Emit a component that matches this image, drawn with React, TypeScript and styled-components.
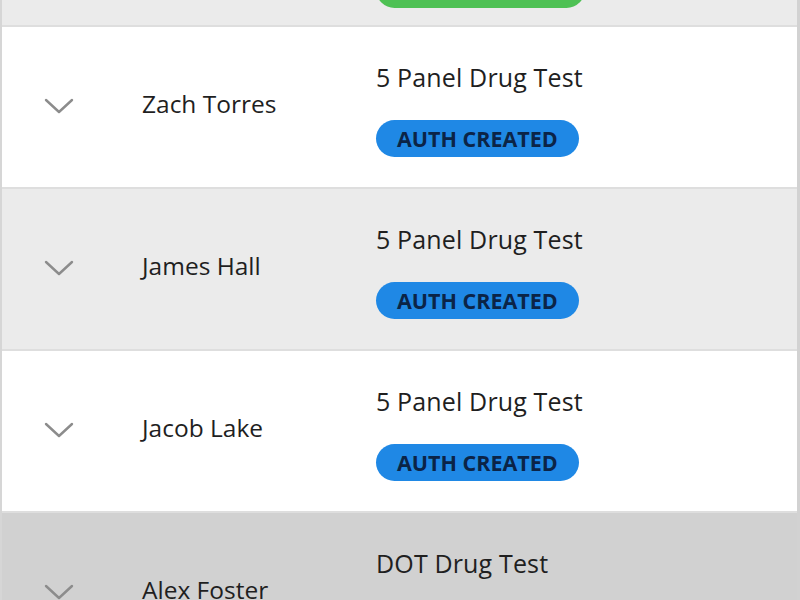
import React from 'react';
import styled, { createGlobalStyle } from 'styled-components';

const GlobalStyle = createGlobalStyle`
  html, body {
    margin: 0;
    padding: 0;
    background: #ffffff;
    overflow: hidden;
  }
  body {
    font-family: "Open Sans", "Noto Sans", sans-serif;
  }
`;

const List = styled.div`
  width: 800px;
  height: 600px;
  overflow: hidden;
  box-sizing: border-box;
  border-left: 2px solid #d6d6d6;
  border-right: 3px solid #d2d2d2;
`;

const Scroller = styled.div`
  margin-top: -135px;
`;

type Tone = 'white' | 'light' | 'dark';

const rowBg: Record<Tone, string> = {
  white: '#ffffff',
  light: '#ebebeb',
  dark: '#d1d1d1',
};

const Row = styled.div<{ $tone: Tone }>`
  height: 160px;
  display: grid;
  grid-template-columns: 140px 234px 1fr;
  align-items: center;
  background: ${(p) => rowBg[p.$tone]};
  border-bottom: 2px solid #dedede;
`;

const Toggle = styled.div`
  display: flex;
  justify-content: flex-start;
  padding-left: 42px;
  padding-bottom: 2px;
`;

const Name = styled.div`
  font-size: 24.5px;
  color: #1f1f1f;
  line-height: 30px;
  padding-bottom: 6px;
`;

const Detail = styled.div<{ $tail?: boolean }>`
  display: flex;
  flex-direction: column;
  align-items: flex-start;
  gap: 28px;
  align-self: ${(p) => (p.$tail ? 'end' : 'center')};
  padding-top: ${(p) => (p.$tail ? '0' : '4px')};
  padding-bottom: ${(p) => (p.$tail ? '17px' : '0')};
`;

const Title = styled.div`
  font-size: 25px;
  color: #1f1f1f;
  line-height: 30px;
  letter-spacing: 0.15px;
`;

const statusColors = {
  green: { bg: '#4ec154', fg: '#0f3a14' },
  blue: { bg: '#1f88e5', fg: '#0b2447' },
};

const Badge = styled.span<{ $kind: 'green' | 'blue' }>`
  display: inline-flex;
  align-items: center;
  height: 37px;
  padding: 0 21px;
  border-radius: 19px;
  background: ${(p) => statusColors[p.$kind].bg};
  color: ${(p) => statusColors[p.$kind].fg};
  font-size: 21.5px;
  font-weight: 700;
`;

const Chevron = () => (
  <svg width="30" height="18" viewBox="0 0 30 18">
    <polyline
      points="2,3 15,15 28,3"
      fill="none"
      stroke="#8c8c8c"
      strokeWidth="2.4"
      strokeLinecap="round"
      strokeLinejoin="round"
    />
  </svg>
);

type Entry = {
  name: string;
  test: string;
  status: string;
  kind: 'green' | 'blue';
  tone: Tone;
};

const entries: Entry[] = [
  { name: 'Zach Torres', test: '5 Panel Drug Test', status: 'AUTH CREATED', kind: 'blue', tone: 'white' },
  { name: 'James Hall', test: '5 Panel Drug Test', status: 'AUTH CREATED', kind: 'blue', tone: 'light' },
  { name: 'Jacob Lake', test: '5 Panel Drug Test', status: 'AUTH CREATED', kind: 'blue', tone: 'white' },
  { name: 'Alex Foster', test: 'DOT Drug Test', status: 'AUTH CREATED', kind: 'blue', tone: 'dark' },
];

const App: React.FC = () => (
  <>
    <GlobalStyle />
    <List>
      <Scroller>
        <Row $tone="light">
          <span />
          <span />
          <Detail $tail>
            <Badge $kind="green">RESULTS READY</Badge>
          </Detail>
        </Row>
        {entries.map((e) => (
          <Row key={e.name} $tone={e.tone}>
            <Toggle>
              <Chevron />
            </Toggle>
            <Name>{e.name}</Name>
            <Detail>
              <Title>{e.test}</Title>
              <Badge $kind={e.kind}>{e.status}</Badge>
            </Detail>
          </Row>
        ))}
      </Scroller>
    </List>
  </>
);

export default App;
